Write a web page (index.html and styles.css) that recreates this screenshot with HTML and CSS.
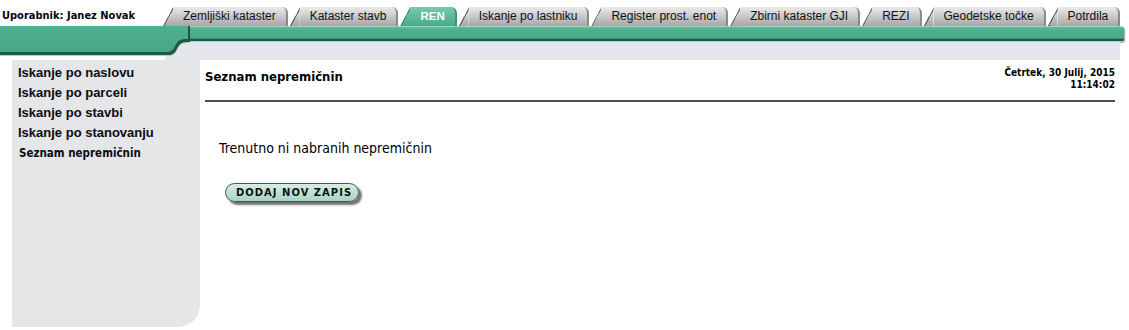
FILE: index.html
```html
<!DOCTYPE html>
<html lang="sl">
<head>
<meta charset="utf-8">
<title>REN - Seznam nepremičnin</title>
<link rel="stylesheet" href="styles.css">
</head>
<body>
<header class="top">
  <div class="user">Uporabnik: Janez Novak</div>
  <nav class="tabs">
    <a class="tab"><span>Zemljiški kataster</span></a>
    <a class="tab"><span>Kataster stavb</span></a>
    <a class="tab active"><span>REN</span></a>
    <a class="tab"><span>Iskanje po lastniku</span></a>
    <a class="tab"><span>Register prost. enot</span></a>
    <a class="tab"><span>Zbirni kataster GJI</span></a>
    <a class="tab"><span>REZI</span></a>
    <a class="tab"><span>Geodetske točke</span></a>
    <a class="tab"><span>Potrdila</span></a>
  </nav>
</header>
<div class="band">
  <svg class="tongue" width="190" height="34" viewBox="0 0 190 34">
    <defs>
      <linearGradient id="tg" gradientUnits="userSpaceOnUse" x1="0" y1="0" x2="0" y2="29">
        <stop offset="0" stop-color="#97d7c1"/>
        <stop offset="0.035" stop-color="#97d7c1"/>
        <stop offset="0.05" stop-color="#62bc9e"/>
        <stop offset="0.15" stop-color="#4eae8d"/>
        <stop offset="1" stop-color="#46a685"/>
      </linearGradient>
    </defs>
    <rect x="165" y="16" width="25" height="18" fill="#e6e6ef"/>
    <path d="M0,0 H190 V16 H187 C181,16 179,19 177,23 C175,27 173,29 168,29 H0 Z" fill="#a5d6c7" transform="translate(0,1)"/>
    <path d="M0,0 H190 V16 H187 C181,16 179,19 177,23 C175,27 173,29 168,29 H0 Z" fill="#1b5a47"/>
    <path d="M0,0 H190 V16 H187 C181,16 179,19 177,23 C175,27 173,29 168,29 H0 Z" fill="url(#tg)" transform="translate(-2,-3)"/>
  </svg>
  <div class="band-right">
    <div class="bar"></div>
    <div class="strip"></div>
  </div>
</div>
<div class="layout">
  <aside class="sidebar">
    <a class="side-link">Iskanje po naslovu</a>
    <a class="side-link">Iskanje po parceli</a>
    <a class="side-link">Iskanje po stavbi</a>
    <a class="side-link">Iskanje po stanovanju</a>
    <a class="side-link current">Seznam nepremičnin</a>
  </aside>
  <main class="main">
    <div class="head">
      <h1 class="title">Seznam nepremičnin</h1>
      <div class="date">Četrtek, 30 Julij, 2015<br>11:14:02</div>
    </div>
    <div class="rule"></div>
    <p class="empty">Trenutno ni nabranih nepremičnin</p>
    <button class="btn" type="button">DODAJ NOV ZAPIS</button>
  </main>
</div>
</body>
</html>
```
FILE: styles.css
```css
body {
  margin: 0;
  background: #fff;
  color: #000;
  font-family: "DejaVu Sans Condensed", "DejaVu Sans", sans-serif;
}

.top {
  display: flex;
  align-items: flex-end;
  height: 26px;
}

.user {
  flex: none;
  width: 161px;
  padding-left: 2px;
  padding-bottom: 4px;
  font-weight: bold;
  font-size: 11px;
  line-height: 13px;
  color: #050510;
  white-space: nowrap;
}

.tabs {
  display: flex;
  gap: 2px;
}

.tab {
  display: flex;
  flex: none;
  height: 19px;
  font-family: "Liberation Sans", Arial, sans-serif;
  font-size: 12px;
  color: #111;
  text-decoration: none;
}

.tab::before {
  content: "";
  width: 10px;
  flex: none;
  clip-path: polygon(0 100%, 100% 0, 100% 100%);
  background:
    linear-gradient(to bottom right, transparent 50%, #6c6c6c 50%, #6c6c6c 57%, transparent 57%),
    linear-gradient(#ebebeb, #a6a6a6);
}

.tab span {
  padding: 0 10px;
  line-height: 19px;
  white-space: nowrap;
  background: linear-gradient(#ebebeb, #a6a6a6);
  border-top-right-radius: 6px;
  border-right: 2px solid #8a8a8a;
}

.tab.active::before {
  background:
    linear-gradient(to bottom right, transparent 50%, #2f7f66 50%, #2f7f66 57%, transparent 57%),
    linear-gradient(#78caae, #4aab8a);
}

.tab.active span {
  background: linear-gradient(#78caae, #4aab8a);
  border-right-color: #3d927a;
  color: #fff;
  font-weight: bold;
  font-size: 11.5px;
}

.band {
  display: flex;
  height: 34px;
}

.tongue {
  display: block;
  flex: none;
}

.band-right {
  flex: 1;
  display: flex;
  flex-direction: column;
  margin-right: 5px;
}

.bar {
  height: 16px;
  background: linear-gradient(to bottom,
    #97d7c1 0, #97d7c1 1px,
    #62bc9e 1px, #4eae8d 4px,
    #48a887 12px, #2f7f66 13px,
    #1b5a47 13px, #1b5a47 15px,
    #a5d6c7 15px);
  border-radius: 0 3px 3px 0;
  box-shadow: 1px 1px 1px rgba(0, 0, 0, 0.35);
}

.strip {
  flex: 1;
  margin-right: 4px;
  background: #e6e6ef;
}

.layout {
  display: flex;
}

.sidebar {
  flex: none;
  margin-left: 12px;
  width: 188px;
  height: 267px;
  box-sizing: border-box;
  padding: 3px 0 0 6px;
  background: #e5e6e8;
  border-bottom-right-radius: 22px;
}

.side-link {
  display: block;
  font-family: "Liberation Sans", Arial, sans-serif;
  font-weight: bold;
  font-size: 13px;
  line-height: 20px;
  color: #0b0b14;
  text-decoration: none;
}

.side-link.current {
  font-family: "DejaVu Sans Condensed", "DejaVu Sans", sans-serif;
  font-size: 11.5px;
  padding-left: 1px;
}

.main {
  flex: 1;
  padding: 7px 14px 0 5px;
}

.head {
  display: flex;
  justify-content: space-between;
  align-items: flex-start;
}

.title {
  margin: 3px 0 0;
  font-size: 13px;
  line-height: 14px;
  font-weight: bold;
}

.date {
  text-align: right;
  font-weight: bold;
  font-size: 10px;
  line-height: 12px;
}

.rule {
  margin-top: 9px;
  border-top: 2px solid #4b4b4b;
}

.empty {
  margin: 38px 0 0 14px;
  font-size: 14px;
  line-height: 17px;
}

.btn {
  display: inline-block;
  margin: 26px 0 0 20px;
  height: 19px;
  padding: 0 6px 0 10px;
  border: 1px solid #3e5a50;
  border-radius: 10px;
  background: linear-gradient(#d6eee3, #a9d4c1);
  box-shadow: 3px 3px 2px rgba(0, 0, 0, 0.55);
  font-family: "DejaVu Sans", sans-serif;
  font-weight: bold;
  font-size: 10px;
  letter-spacing: 1px;
  line-height: 17px;
  color: #111;
}
```
